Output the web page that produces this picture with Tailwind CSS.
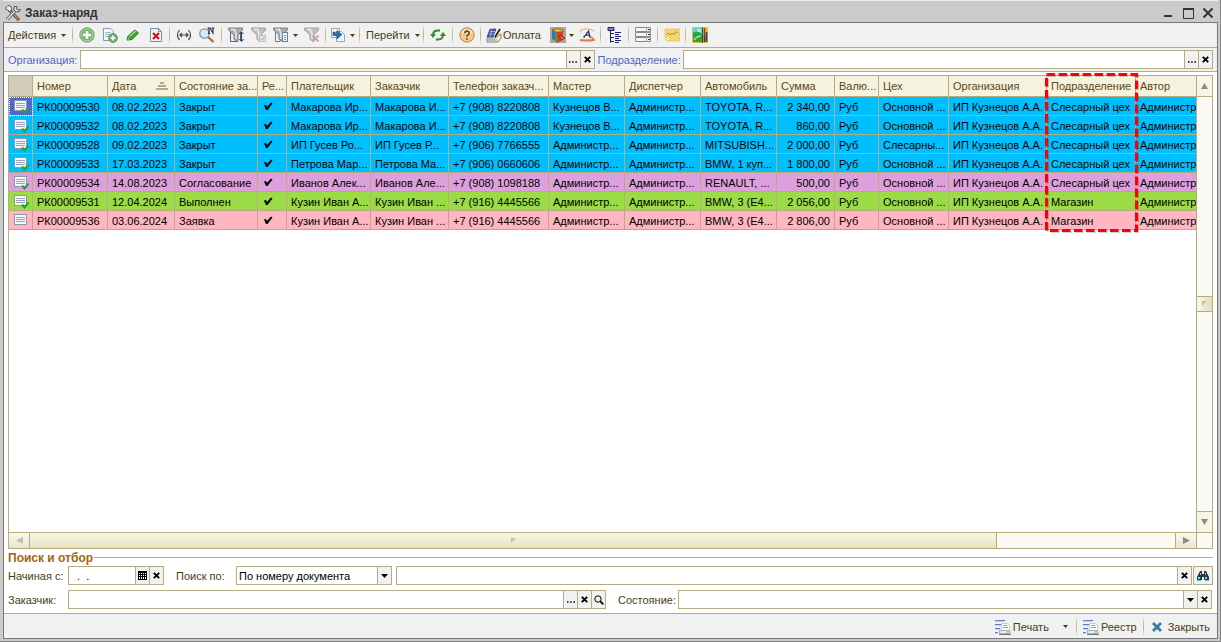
<!DOCTYPE html>
<html lang="ru">
<head>
<meta charset="utf-8">
<title>Заказ-наряд</title>
<script src="https://cdn.jsdelivr.net/npm/@tailwindcss/browser@4"></script>
</head>
<body class="h-screen overflow-hidden bg-[#cbcbcb] font-['Liberation_Sans',Arial,sans-serif] text-[11px] leading-[14px] text-[#4a3c14]">
<svg class="hidden">
  <symbol id="caret" viewBox="0 0 5 3"><path d="M0 0h5L2.500 3z" fill="currentColor"/></symbol>
  <symbol id="cross" viewBox="0 0 7 7"><path d="M.8 .8 6.200 6.200M6.200 .8 .8 6.200" stroke="currentColor" stroke-width="1.900"/></symbol>
  <symbol id="dots" viewBox="0 0 8 2"><path d="M0 .3h1.500v1.500H0zM3.200 .3h1.500v1.500H3.200zM6.400 .3h1.500v1.500H6.400z" fill="currentColor"/></symbol>
  <symbol id="drop" viewBox="0 0 7 4"><path d="M0 0h7L3.500 4z" fill="currentColor"/></symbol>
  <symbol id="funnel" viewBox="0 0 16 16"><path d="M.5 1h14v2L10 8v6.500l-4-2V8L.5 3z" fill="#a9acb0" stroke="#7b8188"/><path d="M3 2.500h3.500L8 7v5" stroke="#e8eaec" stroke-width="1.500" fill="none"/></symbol>
  <symbol id="doc" viewBox="0 0 16 15"><rect x="1.500" y="1.500" width="12" height="10" fill="#f6f8fd" stroke="#8d97ab"/><path d="M3 4.500h9M3 6.500h9M3 8.500h9" stroke="#98a2b8"/></symbol>
  <symbol id="report" viewBox="0 0 16 16"><path d="M0 1.500h10M0 5.500h6M0 9.500h5M0 13.500h3" stroke="#5f7fc0"/><path d="M0 2.500h10M0 6.500h6M0 10.500h5M0 14.500h3" stroke="#c5d2ee"/><path d="M6.500 4.500h6l2 2v5h-8z" fill="#fff" stroke="#c3cad0"/><path d="M8 6.500h4M8 8.500h5" stroke="#86b08c"/><path d="M4.500 11.500h10l1 3h-11z" fill="#e8ebef" stroke="#a9b0b8"/><path d="M4 15.500h12" stroke="#6f7780"/><path d="M12 13h2" stroke="#2c2"/></symbol>
</svg>

<div class="flex h-full flex-col border-r border-b border-[#858585] pr-[2px] pb-[2px] pl-[3px]">
  <header class="flex h-[22px] shrink-0 items-center border-t border-[#ececec] pt-[3px] pl-[2px]">
    <svg class="h-4 w-4 shrink-0" viewBox="0 0 16 16" fill="none"><path d="M4 5 14 15" stroke="#5c3c28" stroke-width="3"/><path d="M4 5 13.500 14.500" stroke="#c99a72" stroke-width="1.200"/><path d="M0 3.500 3 .5 6 1.500 7 4 4.500 6.500 3 5z" fill="#eee" stroke="#555"/><path d="M11 5 2 14.500" stroke="#555" stroke-width="3"/><path d="M11 5 2 14.500" stroke="#eee" stroke-width="1.200"/><path d="M9 1.500v3.500l2 2 3.500-.5 1-2-2 .5-2-1 .5-2.500z" fill="#ddd" stroke="#555"/></svg>
    <h1 class="ml-1 flex-1 text-[12px] font-bold text-[#333]">Заказ-наряд</h1>
    <button aria-label="Свернуть" class="flex h-5 w-5 items-center justify-center"><svg width="8" height="10"><path d="M0 8h8" stroke="#333" stroke-width="2"/></svg></button>
    <button aria-label="Развернуть" class="flex h-5 w-5 items-center justify-center"><svg width="11" height="11"><path d="M.5 1h10v9.500H.5z" fill="none" stroke="#333"/><path d="M0 1h11" stroke="#333" stroke-width="2"/></svg></button>
    <button aria-label="Закрыть окно" class="flex h-5 w-5 items-center justify-center"><svg width="10" height="10"><path d="m.5 .5 9 9M9.500 .5l-9 9" stroke="#333" stroke-width="2"/></svg></button>
  </header>

  <div class="flex min-h-0 flex-1 flex-col border border-[#777] bg-white">
    <!-- Toolbar -->
    <div id="toolbar" class="flex h-6 shrink-0 items-center bg-[#f1f1f1] pl-px">
      <button class="flex h-5 w-16 items-center gap-[5px] pl-[3px]">Действия<svg class="h-[3px] w-[5px]"><use href="#caret"/></svg></button>
      <i data-sep class="ml-px"></i>
      <button aria-label="Добавить" class="flex h-5 w-[23px] items-center justify-center"><svg class="h-4 w-4" viewBox="0 0 16 16"><circle cx="8" cy="8" r="7.200" fill="#73b56a" stroke="#6da267"/><circle cx="8" cy="8" r="6" fill="none" stroke="#b4dcae"/><path d="M8 4v8M4 8h8" stroke="#fff" stroke-width="2.600"/></svg></button>
      <button aria-label="Скопировать" class="flex h-5 w-[23px] items-center justify-center"><svg class="h-4 w-4" viewBox="0 0 16 16"><path d="M1.500 1.500h7l3 3v9h-10z" fill="#f4f8fc" stroke="#8399ae"/><path d="M3.500 5.500h5M3.500 7.500h5M3.500 9.500h3" stroke="#91a6bb"/><circle cx="11" cy="11" r="4.300" fill="#73b56a" stroke="#55904f"/><path d="M11 8.500v5M8.500 11h5" stroke="#fff" stroke-width="1.600"/></svg></button>
      <button aria-label="Изменить" class="flex h-5 w-[23px] items-center justify-center"><svg class="h-4 w-4" viewBox="0 0 16 16"><path d="m2 13 1-4 7-6 3.500 3L7 12.500z" fill="#35a82b" stroke="#207c1c"/><path d="M4 9.500 11 4" stroke="#a6e59b" stroke-width="1.400"/><path d="m2 13 1-3 2.500 2.300z" fill="#e9d3a5" stroke="#555" stroke-width=".5"/></svg></button>
      <button aria-label="Пометить на удаление" class="flex h-5 w-[23px] items-center justify-center"><svg class="h-4 w-4" viewBox="0 0 16 16"><path d="M2.500 1.500h8l3 3v10h-11z" fill="#eef4fb" stroke="#7790a8"/><path d="M10.500 1.500v3h3" fill="none" stroke="#7790a8"/><path d="m5 6 6 6M11 6l-6 6" stroke="#d31616" stroke-width="2.200"/></svg></button>
      <i data-sep></i>
      <button aria-label="Интервал дат" class="flex h-5 w-[23px] items-center justify-center"><svg class="h-4 w-4" viewBox="0 0 16 16" fill="none" stroke="#3c4650" stroke-width="1.200"><path d="M3.500 3Q-.5 8 3.500 13M12.500 3q4 5 0 10M4 8h8M6 6 4 8l2 2M10 6l2 2-2 2"/></svg></button>
      <button aria-label="Поиск по номеру" class="flex h-5 w-[24px] items-center justify-center"><svg class="h-4 w-4" viewBox="0 0 16 16"><path d="m8.500 9.500 6 5.500" stroke="#a2664a" stroke-width="2.200"/><circle cx="5.500" cy="6.500" r="4.700" fill="#d6e9f7" stroke="#87929c" stroke-width="1.300"/><path d="M10 6.500V1h1l3 5V1M8.500 1H11M12.500 1h3M9 6.500h2" stroke="#1c2c44" stroke-width="1.100" fill="none"/></svg></button>
      <i data-sep></i>
      <button aria-label="Отбор" class="flex h-5 w-[23px] items-center justify-center"><svg class="h-4 w-4" viewBox="0 0 16 16"><path d="M2.500 5v9.500h7M12.500 3v11" stroke="#4a6580" fill="none"/><use href="#funnel"/><path d="M13.500 5v9M11.500 12l2 2.500 2-2.500M11.500 7l2-2 2 2" stroke="#2b4257" fill="none"/></svg></button>
      <button aria-label="Отбор по значению" class="flex h-5 w-[23px] items-center justify-center"><svg class="h-4 w-4 opacity-70" viewBox="0 0 16 16"><use href="#funnel"/><rect x="8.500" y="8.500" width="6" height="6" fill="#d8dde0" stroke="#a5adb3"/><path d="m10 12 1.500 1 2-3" stroke="#7b9a9c" fill="none"/></svg></button>
      <button aria-label="Список отборов" class="flex h-5 w-[30px] items-center justify-center gap-1"><svg class="h-4 w-4" viewBox="0 0 16 16"><path d="M2.500 5v9.500h5" stroke="#68809a" fill="none"/><use href="#funnel"/><rect x="9.500" y="5.500" width="5" height="9" fill="#eef5fb" stroke="#68809a"/><path d="M11 8.500h2M11 10.500h2M11 12.500h2" stroke="#7d97b2"/></svg><svg class="h-[3px] w-[5px]"><use href="#caret"/></svg></button>
      <button aria-label="Отключить отбор" class="flex h-5 w-[23px] items-center justify-center"><svg class="h-4 w-4 opacity-70" viewBox="0 0 16 16"><use href="#funnel"/><path d="m8.500 8.500 6 6M14.500 8.500l-6 6" stroke="#b18580" stroke-width="2"/></svg></button>
      <i data-sep></i>
      <button aria-label="Ввести на основании" class="flex h-5 w-[29px] items-center justify-center gap-1"><svg class="h-4 w-4" viewBox="0 0 16 16"><path d="M1.500 1.500h8v9h-8z" fill="#f2f7fb" stroke="#8fa5ba"/><path d="M6.500 4.500h5l3 3v7h-8z" fill="#f2f7fb" stroke="#8fa5ba"/><path d="M3 5v3.500h4V12l5-4.500L7 3.500V6H5V5z" fill="#2f6f9d" stroke="#1e4c70" stroke-width=".6"/></svg><svg class="h-[3px] w-[5px]"><use href="#caret"/></svg></button>
      <i data-sep></i>
      <button class="flex h-5 w-[59px] items-center gap-[5px] pl-1">Перейти<svg class="h-[3px] w-[5px]"><use href="#caret"/></svg></button>
      <i data-sep></i>
      <button aria-label="Обновить" class="flex h-5 w-[24px] items-center justify-center"><svg class="h-4 w-4" viewBox="0 0 16 16"><path d="M3 8q0-4.500 5-4.500h2M13 8q0 4.500-5 4.500H6" fill="none" stroke="#2f8a2f" stroke-width="1.800"/><path d="M0 7h6l-3 4zM10 9h6l-3-4z" fill="#2f8a2f"/></svg></button>
      <i data-sep></i>
      <button aria-label="Справка" class="flex h-5 w-[23px] items-center justify-center"><svg class="h-4 w-4" viewBox="0 0 16 16"><circle cx="8" cy="8" r="7.200" fill="#f5c888" stroke="#b98448"/><path d="M3 6q4-6 10 0" stroke="#fdeacb" stroke-width="2" fill="none"/><path d="M5.800 6.300q0-2.300 2.200-2.300t2.200 2Q10.200 7.500 8 8.800v1M8 11v1.700" stroke="#5a4028" stroke-width="1.500" fill="none"/></svg></button>
      <i data-sep></i>
      <button class="flex h-5 w-[60px] items-center gap-px pl-[3px]"><svg class="h-4 w-4 shrink-0" viewBox="0 0 16 16"><path d="M4 2h6L7 10H1z" fill="#4257ae" stroke="#252f66" stroke-width=".6"/><path d="M4 4.500h5M3 7h5M6 2 4 10" stroke="#b7c4ef" stroke-width=".7"/><path d="M1 11h8l6-4v4l-3 4H1z" fill="#f1eedd" stroke="#666" stroke-width=".8"/><path d="M9 10 14 2" stroke="#111" stroke-width="1.500"/><path d="M2 13h9" stroke="#88846c"/><path d="m12 8 3-1" stroke="#d6b020" stroke-width="1.500"/></svg>Оплата</button>
      <button aria-label="Отчёты" class="flex h-5 w-[33px] items-center justify-center gap-[3px] pl-1"><svg class="h-4 w-4" viewBox="0 0 16 16"><path d="M0 0h16v16H0z" fill="#aaa6a1"/><path d="M2 3v9l6 4V5z" fill="#3da24f"/><path d="M2 3q5-3 11 0v3L8 6z" fill="#f0b736" stroke="#75511d" stroke-width=".7"/><path d="M7 5v11l6-3V4z" fill="#dc3b26"/><path d="M2 4v7l3 2V5z" fill="#366fc4"/><path d="m10 8 5 3-3 2-2-2z" fill="#ef6c39" stroke="#5d1d17" stroke-width=".7"/></svg><svg class="h-[3px] w-[5px]"><use href="#caret"/></svg></button>
      <button aria-label="Шрифт" class="flex h-5 w-[22px] items-center justify-center"><svg class="h-4 w-4" viewBox="0 0 16 16" fill="none"><path d="M1 5q0-3 7-3 4 0 7 2" stroke="#f0be91" stroke-width="1.600"/><path d="M5 10 9.500 4l1.500 6M6.500 8.200h4M4 10h2M10 10h2" stroke="#22304c" stroke-width="1.200"/><path d="M1 13q5 1 14 0-1-2-3-3" stroke="#e47b3a" stroke-width="1.800"/></svg></button>
      <i data-sep></i>
      <button aria-label="Структура подчинённости" class="flex h-5 w-[23px] items-center justify-center"><svg class="h-4 w-4" viewBox="0 0 16 16" fill="none" stroke="#1a2370"><path d="M1 .5h6v3H1zM1 2h6" /><path d="M3.500 4v11.500M3.500 6.500H7M3.500 10.500H7M3.500 14.500H7"/><path d="M8 5.500h6M8 7.500h4M8 9.500h6M8 11.500h4M8 13.500h6M8 15.500h4"/></svg></button>
      <i data-sep></i>
      <button aria-label="Список" class="flex h-5 w-[24px] items-center justify-center"><svg class="h-4 w-4" viewBox="0 0 16 16"><path d="M.5 .5h15v4H.5zM.5 5.500h15v4H.5zM.5 10.500h15v4H.5z" fill="#f6f6f6" stroke="#8a8a8a"/><path d="M11.500 1v14" stroke="#aaa"/><path d="M13 2.500h2M13 7.500h2M13 12.500h2" stroke="#333"/></svg></button>
      <i data-sep></i>
      <button aria-label="Заметки" class="flex h-5 w-[23px] items-center justify-center"><svg class="h-4 w-4" viewBox="0 0 16 16"><path d="M1 2h15v12H3l-2-2z" fill="#f5d66f" stroke="#e1bd54" stroke-width=".6"/><path d="M3 7q1-2 2 0t2 0 2 0 2-1 3 0" stroke="#b8813c" fill="none"/><path d="M1 11h4v3z" fill="#fff0ae"/></svg></button>
      <i data-sep></i>
      <button aria-label="Картинки" class="flex h-5 w-[23px] items-center justify-center"><svg class="h-4 w-4" viewBox="0 0 16 16"><path d="M0 0h16v16H0z" fill="#e9bd37"/><path d="M1 1h9v7H1z" fill="#55d5ea"/><path d="M1 6q4-3 9 1v8H1z" fill="#2c9f4b"/><circle cx="7" cy="3.500" r="1.500" fill="#fff35a"/><path d="M2 13q3-4 7-4" stroke="#aee36f" stroke-width="1.500" fill="none"/><path d="M10 0h1v16h-1z" fill="#245d45"/><path d="M12.500 1v8" stroke="#a33b20" stroke-width="1.500"/><path d="M12.500 9v6M14.500 5v10" stroke="#333b66" stroke-width="1.600"/></svg></button>
    </div>

    <!-- Organisation filters -->
    <div class="grid h-[25px] shrink-0 grid-cols-[72px_515fr_88px_531fr] items-center border-y border-[#b6ac82] bg-[#f1f1f1] pr-1 pl-1 text-[#4f67c6]">
      <label for="org">Организация:</label>
      <div data-field><input id="org" class="min-w-0 flex-1 outline-none"><button data-fb="dots" aria-label="Выбрать организацию"></button><button data-fb="cross" aria-label="Очистить организацию"></button></div>
      <label for="dept" class="pl-[3px]">Подразделение:</label>
      <div data-field><input id="dept" class="min-w-0 flex-1 outline-none"><button data-fb="dots" aria-label="Выбрать подразделение"></button><button data-fb="cross" aria-label="Очистить подразделение"></button></div>
    </div>

    <!-- Orders list -->
    <div class="relative mx-1 mt-[3px] flex min-h-0 flex-1 flex-col border border-[#b6ac82]">
      <div class="flex min-h-0 flex-1">
        <div class="min-w-0 flex-1 overflow-hidden">
          <table class="w-full table-fixed border-separate border-spacing-0">
            <colgroup><col class="w-[24px]"><col class="w-[75px]"><col class="w-[67px]"><col class="w-[83px]"><col class="w-[29px]"><col class="w-[84px]"><col class="w-[78px]"><col class="w-[100px]"><col class="w-[76px]"><col class="w-[76px]"><col class="w-[76px]"><col class="w-[58px]"><col class="w-[44px]"><col class="w-[70px]"><col class="w-[98px]"><col class="w-[89px]"><col></colgroup>
            <thead><tr id="head" class="h-[21px] bg-[#f5f2de] text-left text-[#5c4718]"></tr></thead>
            <tbody id="rows" class="text-black"></tbody>
          </table>
        </div>
        <div class="flex w-4 shrink-0 flex-col border-l border-[#b6ac82] bg-[#faf9f4]">
          <button aria-label="Вверх" class="flex h-[21px] items-center justify-center border-b border-[#b6ac82] bg-[#f7f5e8]"><svg width="7" height="6"><path d="M3.500 0 7 6H0z" fill="#8c8c84"/></svg></button>
          <div class="flex-[199]"></div>
          <div class="flex h-4 items-center justify-center border-y border-[#b6ac82] bg-linear-to-r from-[#f9f7ea] to-[#e3ddb8]"><svg width="5" height="5"><path d="M0 0h5L0 5z" fill="#c5bf9d"/></svg></div>
          <div class="flex-[200]"></div>
          <button aria-label="Вниз" class="flex h-[21px] items-center justify-center border-t border-[#b6ac82] bg-[#f7f5e8]"><svg width="7" height="6"><path d="M0 0h7L3.500 6z" fill="#8c8c84"/></svg></button>
        </div>
      </div>
      <div class="flex h-4 shrink-0 border-t border-[#b6ac82] bg-[#faf9f4]">
        <button aria-label="Влево" class="flex w-[21px] items-center justify-center border-r border-[#b6ac82] bg-linear-to-b from-[#faf8ee] to-[#eae5cb]"><svg width="7" height="7"><path d="M7 0v7L0 3.500z" fill="#c2c0b4"/></svg></button>
        <div class="flex flex-[967] items-center justify-center border-r border-[#b6ac82] bg-linear-to-b from-[#f9f7ea] to-[#e6e0bd]"><svg width="5" height="5"><path d="M0 0h5L0 5z" fill="#c5bf9d"/></svg></div>
        <div class="flex-[178]"></div>
        <button aria-label="Вправо" class="flex w-[22px] items-center justify-center border-x border-[#b6ac82] bg-linear-to-b from-[#faf8ee] to-[#eae5cb]"><svg width="7" height="7"><path d="M0 0v7l7-3.500z" fill="#8c8c84"/></svg></button>
        <div class="w-[15px]"></div>
      </div>
      <!-- Highlight over the department column -->
      <svg class="pointer-events-none absolute -top-[4px] left-[1035px] drop-shadow-[1px_1px_0px_rgba(0,0,0,0.2)]" width="95" height="162"><rect x="2.500" y="2.500" width="90" height="156" fill="none" stroke="#ff0000" stroke-width="3" stroke-dasharray="8.500 3.500"/></svg>
    </div>

    <!-- Search and selection -->
    <fieldset class="shrink-0 px-1 pb-1">
      <legend class="flex h-[17px] w-full items-center text-[12px] font-bold text-[#a5640c]">Поиск и отбор<span class="ml-px h-px flex-1 bg-[#b6ac82]"></span></legend>
      <div class="flex items-center">
        <label for="from" class="w-[60px]">Начиная с:</label>
        <div class="flex w-24"><div data-field><input id="from" value=".  ." class="min-w-0 flex-1 pl-2 text-black outline-none"><button data-fb="grid" aria-label="Календарь"></button><button data-fb="cross" aria-label="Очистить дату"></button></div></div>
        <label for="by" class="w-[72px] pl-3">Поиск по:</label>
        <div class="flex w-[156px]"><div data-field><select id="by" class="min-w-0 flex-1 appearance-none pl-[2px] text-black outline-none"><option>По номеру документа</option></select><button data-fb="drop" aria-label="Открыть список"></button></div></div>
        <div class="ml-1 flex flex-1"><div data-field><input aria-label="Строка поиска" class="min-w-0 flex-1 outline-none"><button data-fb="cross" aria-label="Очистить поиск"></button></div></div>
        <button aria-label="Найти" class="ml-px flex h-[19px] w-5 items-center justify-center border border-[#b6ac82] bg-[#f3f2ee]"><svg width="12" height="10" viewBox="0 0 12 10"><path d="M3 0h2v3h2V0h2l3 6v3H7V6H5v3H0V6z" fill="#2c3744"/><path d="M1 6h2v2H1zM8 6h2v2H8zM3 2h1v2H3zM8 2h1v2H8z" fill="#b5c2cc"/><path d="M0 9.500h4M8 9.500h4" stroke="#49d3e4"/></svg></button>
      </div>
      <div class="mt-[5px] grid grid-cols-[60px_538fr_72px_534fr] items-center pr-px">
        <label for="cust">Заказчик:</label>
        <div data-field><input id="cust" class="min-w-0 flex-1 outline-none"><button data-fb="dots" aria-label="Выбрать заказчика"></button><button data-fb="cross" aria-label="Очистить заказчика"></button><button data-fb="lens" aria-label="Открыть заказчика"></button></div>
        <label for="state" class="pl-3">Состояние:</label>
        <div data-field><input id="state" class="min-w-0 flex-1 outline-none"><button data-fb="drop" aria-label="Выбрать состояние"></button><button data-fb="cross" aria-label="Очистить состояние"></button></div>
      </div>
    </fieldset>

    <footer class="flex h-[25px] shrink-0 items-center justify-end border-t border-[#b6ac82] bg-[#f1f1f1] pt-px pr-[7px]">
      <button class="flex items-center gap-[2px]"><svg class="h-4 w-4"><use href="#report"/></svg>Печать</button>
      <button aria-label="Варианты печати" class="ml-[9px] flex h-4 w-4 items-center justify-center"><svg class="h-[3px] w-[5px]"><use href="#caret"/></svg></button>
      <i data-sep></i>
      <button class="ml-1 flex items-center gap-[2px]"><svg class="h-4 w-4"><use href="#report"/></svg>Реестр</button>
      <i data-sep class="ml-1"></i>
      <button class="ml-[6px] flex items-center gap-[6px]"><svg width="10" height="10"><path d="m1 1 8 8M9 1 1 9" stroke="#3b7ba6" stroke-width="2.800"/></svg>Закрыть</button>
    </footer>
  </div>
</div>

<script>
const cls = (el, c) => el.classList.add(...c.split(' '));
document.querySelectorAll('[data-sep]').forEach(e => {
  cls(e, 'flex h-[18px] w-[5px] shrink-0 justify-center');
  e.innerHTML = '<span class="w-px bg-linear-to-b from-[#e8e5d6] via-[#b6ac82] to-[#e8e5d6]"></span>';
});
document.querySelectorAll('[data-field]').forEach(e => cls(e, 'flex h-[19px] min-w-0 flex-1 border border-[#b6ac82] bg-white'));
const icons = {
  dots: '<svg class="mt-1 h-[2px] w-2"><use href="#dots"/></svg>',
  cross: '<svg class="h-[7px] w-[7px]"><use href="#cross"/></svg>',
  drop: '<svg class="h-1 w-[7px]"><use href="#drop"/></svg>',
  grid: '<svg width="9" height="9"><path d="M0 0h9v9H0z"/><path d="M1 2h1v1H1zM3 2h1v1H3zM5 2h1v1H5zM7 2h1v1H7zM1 4h1v1H1zM3 4h1v1H3zM5 4h1v1H5zM7 4h1v1H7zM1 6h1v2H1zM3 6h1v2H3zM5 6h1v2H5zM7 6h1v2H7z" fill="#fff"/></svg>',
  lens: '<svg width="10" height="10"><circle cx="4" cy="4" r="3.200" fill="none" stroke="#000"/><path d="m6.300 6.300 3 3" stroke="#000" stroke-width="1.800"/></svg>'
};
document.querySelectorAll('[data-fb]').forEach(e => {
  cls(e, 'flex w-[14px] shrink-0 items-center justify-center border-l border-[#b6ac82] bg-[#f1f1f1] text-black');
  e.innerHTML = icons[e.dataset.fb];
});

const heads = ['', 'Номер', 'Дата', 'Состояние за...', 'Ре...', 'Плательщик', 'Заказчик', 'Телефон заказч...', 'Мастер', 'Диспетчер', 'Автомобиль', 'Сумма', 'Валю...', 'Цех', 'Организация', 'Подразделение', 'Автор'];
document.getElementById('head').innerHTML = heads.map((h, i) => {
  const sort = i === 2 ? '<svg class="mr-[6px]" width="12" height="8"><path d="M4 0h4v2H4zM2 3h8v2H2zM0 6h12v2H0z" fill="#b6ac82"/></svg>' : '';
  const bg = i === 0 ? 'bg-[#d1cdb8]' : 'bg-[#f5f2de]';
  const edge = i === 16 ? '' : 'border-r';
  return `<th class="overflow-hidden border-b ${edge} border-[#b6ac82] ${bg} p-0 pl-1 font-normal whitespace-nowrap"><div class="flex items-center justify-between">${h}${sort}</div></th>`;
}).join('');

const A = 'Администр...', O = 'Основной ...';
const rows = [
  ['bg-[#00bfff]', 'РК00009530', '08.02.2023', 'Закрыт', 'Макарова Ир...', 'Макарова И...', '+7 (908) 8220808', 'Кузнецов В...', 'TOYOTA, R...', '2 340,00', O, 'Слесарный цех'],
  ['bg-[#00bfff]', 'РК00009532', '08.02.2023', 'Закрыт', 'Макарова Ир...', 'Макарова И...', '+7 (908) 8220808', 'Кузнецов В...', 'TOYOTA, R...', '860,00', O, 'Слесарный цех'],
  ['bg-[#00bfff]', 'РК00009528', '09.02.2023', 'Закрыт', 'ИП Гусев Ро...', 'ИП Гусев Р...', '+7 (906) 7766555', A, 'MITSUBISH...', '2 000,00', 'Слесарны...', 'Слесарный цех'],
  ['bg-[#00bfff]', 'РК00009533', '17.03.2023', 'Закрыт', 'Петрова Мар...', 'Петрова Ма...', '+7 (906) 0660606', A, 'BMW, 1 куп...', '1 800,00', O, 'Слесарный цех'],
  ['bg-[#dda0dd]', 'РК00009534', '14.08.2023', 'Согласование', 'Иванов Алек...', 'Иванов Але...', '+7 (908) 1098188', A, 'RENAULT, ...', '500,00', O, 'Слесарный цех'],
  ['bg-[#9adb46]', 'РК00009531', '12.04.2024', 'Выполнен', 'Кузин Иван А...', 'Кузин Иван ...', '+7 (916) 4445566', A, 'BMW, 3 (E4...', '2 056,00', O, 'Магазин'],
  ['bg-[#ffb6c1]', 'РК00009536', '03.06.2024', 'Заявка', 'Кузин Иван А...', 'Кузин Иван ...', '+7 (916) 4445566', A, 'BMW, 3 (E4...', '2 806,00', O, 'Магазин']
];
const tick = '<svg class="ml-px" width="10" height="11"><path d="M1 3.500 3 3l1 2L8 .5l1.500 1L4.500 8H3z" fill="#000"/></svg>';
document.getElementById('rows').innerHTML = rows.map((r, n) => {
  const mark = n < 6 ? '<path d="m9 10.500 2.500 3 4-5" stroke="#2f9e3c" stroke-width="2.200" fill="none"/>' : '';
  const icon = `<svg width="16" height="15" viewBox="0 0 16 15"><use href="#doc"/>${mark}</svg>`;
  const cells = [icon, r[1], r[2], r[3], tick, r[4], r[5], r[6], r[7], A, r[8], r[9], 'Руб', r[10], 'ИП Кузнецов А.А.', r[11], 'Администр'];
  return `<tr class="h-[19px] ${r[0]}">` + cells.map((c, i) => {
    const edge = i === 16 ? '' : 'border-r';
    const align = i === 11 ? 'pt-[2px] pr-1 text-right' : i === 0 ? 'pl-1' : 'pt-[2px] pl-1';
    const sel = n === 0 && i === 0 ? 'bg-[#4a6cc8] outline-1 -outline-offset-1 outline-dotted outline-white' : '';
    return `<td class="overflow-hidden border-b ${edge} border-[#b6ac82] p-0 whitespace-nowrap ${align} ${sel}">${c}</td>`;
  }).join('') + '</tr>';
}).join('');
</script>
</body>
</html>
